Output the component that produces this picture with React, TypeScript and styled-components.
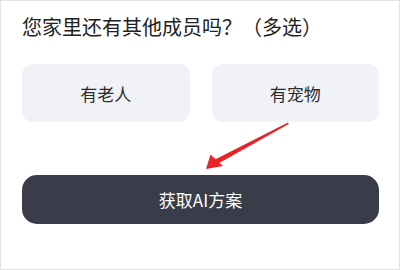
import React from 'react';
import styled, { createGlobalStyle } from 'styled-components';

const GlobalStyle = createGlobalStyle`
  html, body {
    margin: 0;
    padding: 0;
    background: #ffffff;
  }
  body {
    font-family: "Noto Sans CJK SC", "Noto Sans", sans-serif;
  }
`;

const Frame = styled.div`
  position: relative;
  box-sizing: border-box;
  width: 400px;
  height: 270px;
  border: 1px solid #e4e4e4;
  padding: 12px 20px 0 21px;
  background: #ffffff;
`;

const Title = styled.h2`
  margin: 0;
  font-size: 20px;
  line-height: 28px;
  font-weight: 400;
  color: #222222;
`;

const Options = styled.div`
  display: grid;
  grid-template-columns: 1fr 1fr;
  gap: 22px;
  margin-top: 23px;
`;

const Option = styled.button<{ $selected?: boolean }>`
  height: 58px;
  border: none;
  border-radius: 11px;
  background: ${(p) => (p.$selected ? '#e3e7f0' : '#f0f2f7')};
  color: #2c2c2c;
  font-family: inherit;
  font-size: 17px;
  cursor: pointer;
`;

const Submit = styled.button`
  display: block;
  width: 100%;
  height: 49px;
  margin-top: 53px;
  border: none;
  border-radius: 15px;
  background: #3a3d49;
  color: #ffffff;
  font-family: inherit;
  font-size: 17px;
  cursor: pointer;
`;

// red annotation arrow drawn over the page
const Pointer = styled.svg`
  position: absolute;
  left: 0;
  top: 0;
  pointer-events: none;
`;

const options = ['有老人', '有宠物'];

export default function App() {
  return (
    <>
      <GlobalStyle />
      <Frame>
        <Title>您家里还有其他成员吗？（多选）</Title>
        <Options>
          {options.map((o) => (
            <Option key={o}>{o}</Option>
          ))}
        </Options>
        <Submit>获取AI方案</Submit>
        <Pointer width="400" height="270" viewBox="0 0 400 270">
          <polygon points="287,121.5 287.8,123 215.5,163.5 213,159" fill="#e8242a" />
          <polygon points="205,168 209.5,153.5 222,165" fill="#e8242a" />
        </Pointer>
      </Frame>
    </>
  );
}
